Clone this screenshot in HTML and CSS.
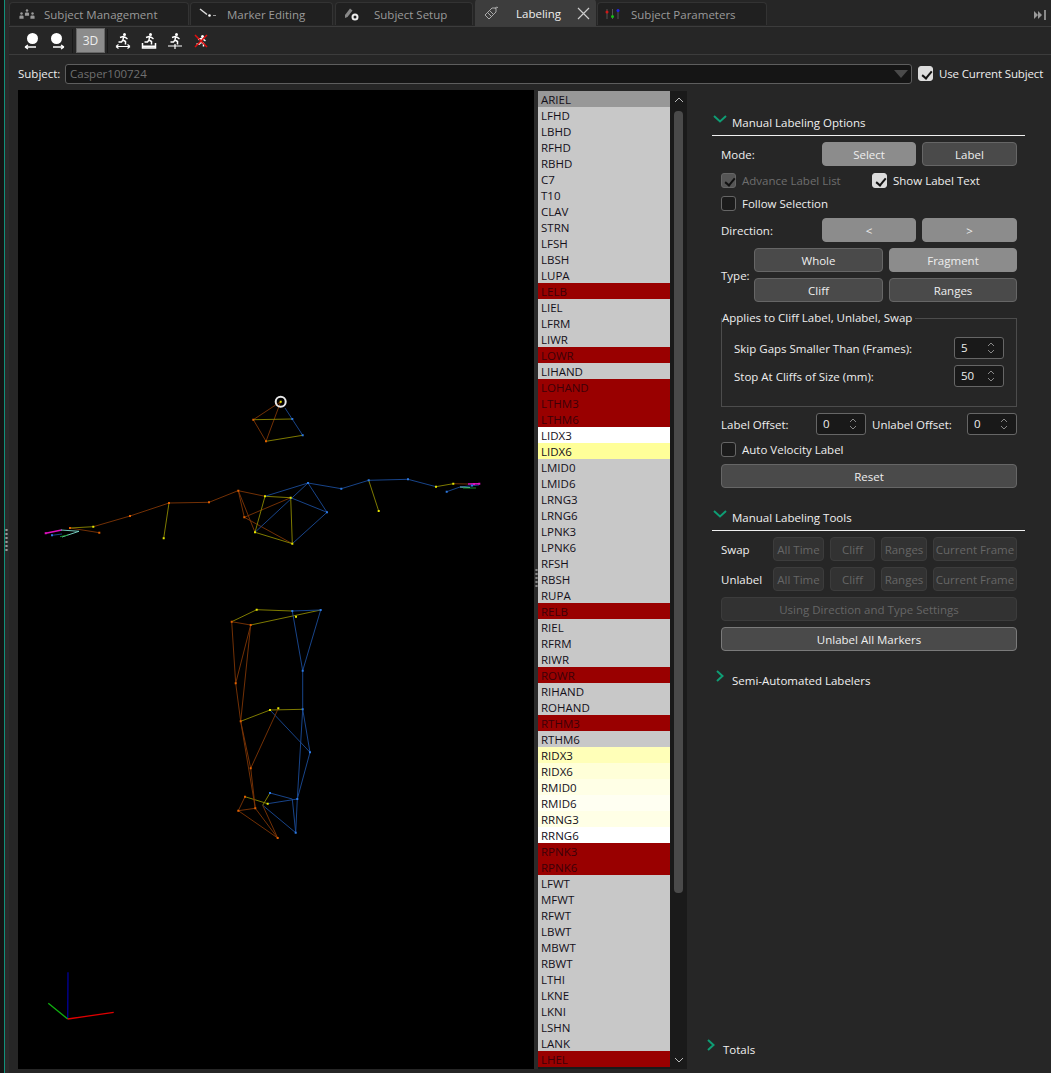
FILE: index.html
```html
<!DOCTYPE html>
<html lang="en">
<head>
    <meta charset="UTF-8">
    <title>Labeling</title>
    <link rel="stylesheet" href="styles.css">
</head>
<body>
    <svg class="defs" width="0" height="0">
        <symbol id="runner" viewBox="0 0 16 12">
            <circle cx="9.5" cy="1.5" r="1.5" fill="#fff"/>
            <path d="M5 4.5 L8 3.5 L10.5 4.5 L12.5 6 M8.5 4 L8 7 L10.5 8.5 L10.5 11.5 M8 7 L6.5 9 L3.5 9" fill="none" stroke="#fff" stroke-width="1.5"/>
        </symbol>
        <symbol id="person" viewBox="0 0 6 8">
            <circle cx="3" cy="1.7" r="1.5" fill="#999"/>
            <path d="M0.5 8 V5.5 Q0.5 4 2 4 H4 Q5.5 4 5.5 5.5 V8 Z" fill="#999"/>
        </symbol>
    </svg>

    <div class="app">
        <div class="edge"><div class="edge-dots"></div></div>
        <div class="main">
            <div class="tabs">
                <div class="tab tab-mgmt">
                    <svg class="tab-icon" width="16" height="12" viewBox="0 0 16 12"><use href="#person" x="0" y="4" width="5" height="7"/><use href="#person" x="5.5" y="1" width="5" height="7"/><use href="#person" x="11" y="4" width="5" height="7"/></svg>
                    Subject Management
                </div>
                <div class="tab tab-marker">
                    <svg class="tab-icon" width="17" height="12" viewBox="0 0 17 12"><path d="M1 1 L8 6.5" stroke="#ddd" stroke-width="1.5"/><circle cx="10.5" cy="7.5" r="1.3" fill="#fff"/><path d="M14 7.5 h3" stroke="#999"/></svg>
                    Marker Editing
                </div>
                <div class="tab tab-setup">
                    <svg class="tab-icon" width="16" height="14" viewBox="0 0 16 14"><path d="M1 8 L6 1.5 L8.5 3.5 L3.5 10 L1 11 Z" fill="#888"/><circle cx="11" cy="10" r="2.5" fill="none" stroke="#eee" stroke-width="2"/></svg>
                    Subject Setup
                </div>
                <div class="tab tab-active">
                    <svg class="tab-icon" width="15" height="15" viewBox="0 0 15 15"><path d="M1 9 L8 2 H12 V6 L5 13 Z M4 7 L8 11 M6 5 L10 9" fill="none" stroke="#aaa"/><path d="M11 3 Q12 0 14 1.5" fill="none" stroke="#aaa"/></svg>
                    <span class="tab-title">Labeling</span>
                    <svg class="tab-close" width="13" height="13" viewBox="0 0 13 13"><path d="M1 1 L12 12 M12 1 L1 12" stroke="#ccc" stroke-width="1.2"/></svg>
                </div>
                <div class="tab tab-params">
                    <svg class="tab-icon" width="15" height="11" viewBox="0 0 15 11"><path d="M2 0 V10 M7.5 0 V10 M13 0 V10" stroke="#555"/><circle cx="2" cy="3" r="1.5" fill="#d01818"/><circle cx="7.5" cy="7.5" r="1.5" fill="#18c018"/><circle cx="13" cy="1.5" r="1.5" fill="#2020e0"/></svg>
                    Subject Parameters
                </div>
                <svg class="tabs-end" width="13" height="10" viewBox="0 0 13 10"><path d="M1 1 L5 5 L1 9 Z M5 1 L9 5 L5 9 Z" fill="#999"/><path d="M12 0 V10" stroke="#ccc" stroke-width="1.2"/></svg>
            </div>

            <div class="toolbar">
                <svg class="tool" width="18" height="18" viewBox="0 0 18 18"><circle cx="9.5" cy="6.5" r="5.5" fill="#fff"/><path d="M2 15 H13 M2 15 L5 13 M2 15 L5 17" fill="none" stroke="#fff" stroke-width="1.3"/></svg>
                <svg class="tool" width="18" height="18" viewBox="0 0 18 18"><circle cx="8.5" cy="6.5" r="5.5" fill="#fff"/><path d="M5 15 H16 M16 15 L13 13 M16 15 L13 17" fill="none" stroke="#fff" stroke-width="1.3"/></svg>
                <div class="tool-sep"></div>
                <div class="tool-3d">3D</div>
                <div class="tool-sep"></div>
                <svg class="tool" width="16" height="16" viewBox="0 0 16 16"><use href="#runner" width="16" height="12"/><path d="M1 13.5 H15 M1 13.5 L3.5 11.5 M1 13.5 L3.5 15.5 M15 13.5 L12.5 11.5 M15 13.5 L12.5 15.5" fill="none" stroke="#fff" stroke-width="1.2"/></svg>
                <svg class="tool" width="16" height="16" viewBox="0 0 16 16"><use href="#runner" width="16" height="12"/><path d="M1.5 10 V15 H14.5 V10" fill="none" stroke="#fff" stroke-width="1.5"/><path d="M1.5 13.5 H14.5" stroke="#fff" stroke-width="2"/></svg>
                <svg class="tool" width="16" height="16" viewBox="0 0 16 16"><use href="#runner" width="16" height="12"/><path d="M1 13 H15 M8 11 V16" fill="none" stroke="#fff" stroke-width="1.2"/></svg>
                <svg class="tool" width="16" height="16" viewBox="0 0 16 16"><use href="#runner" y="2" width="16" height="12"/><path d="M2 2 L14 14 M14 2 L2 14" stroke="#e01010" stroke-width="1.5"/></svg>
            </div>

            <div class="subject-row">
                <span class="subject-label">Subject:</span>
                <div class="combo">Casper100724<span class="combo-arrow"></span></div>
                <label class="check"><span class="box on"></span>Use Current Subject</label>
            </div>

            <div class="body">
                <div class="viewport">
                    <svg class="skeleton" viewBox="18 90 516 979" width="516" height="979">
                        <!-- head -->
                        <path class="bone orange" d="M280.7 401.7 L253.3 419.7 L266 441.3 L280.7 401.7"/>
                        <path class="bone yellow" d="M253.3 419.7 L292.3 419 M266 441.3 L302.7 435.3"/>
                        <path class="bone blue" d="M285 408 L302.7 435.3"/>
                        <!-- torso -->
                        <path class="bone orange" d="M238.3 490.7 L265 496.3 M238.3 490.7 L255 532.3 M238.3 490.7 L244.3 517.3 L292.3 543.7 M244.3 517.3 L290.7 497.7"/>
                        <path class="bone yellow" d="M255 532.3 L292.3 543.7 M265 496.3 L290.7 497.7 M265 496.3 L255 532.3 M290.7 497.7 L292.3 543.7"/>
                        <path class="bone blue" d="M265 496.3 L308 483 M255 532.3 L308 483 M308 483 L327 512.3 M290.7 497.7 L327 512.3 M327 512.3 L292.3 543.7 M308 483 L341.3 488.7 L368.7 480.3 L408 479.3 L436 486.7"/>
                        <!-- arm on the right -->
                        <path class="bone yellow" d="M368.7 480.3 L378.7 511 M436 486.7 L453.3 483.7"/>
                        <path class="bone orange" d="M453.3 483.7 L468 484"/>
                        <path class="bone blue" d="M446.7 491.7 L460 487 L479 485"/>
                        <path class="bone magenta" d="M468 484 L479.3 483.7"/>
                        <path class="bone cyan" d="M460 487 L470 487.5"/>
                        <path class="bone green" d="M463 488 L476 488"/>
                        <!-- arm on the left -->
                        <path class="bone orange" d="M238 490.7 L209 502.3 L169 503 L130 516 L93.3 526.7 M70 528 L99.3 532.7"/>
                        <path class="bone yellow" d="M93.3 526.7 L70 528 M169 503 L163.7 538.3"/>
                        <path class="bone magenta" d="M45.7 533.3 L61.7 530"/>
                        <path class="bone cyan" d="M61 530 L79 531.3 L62 537"/>
                        <path class="bone blue" d="M52 535.3 L62 534"/>
                        <path class="bone green" d="M60 536.7 L68 535"/>
                        <!-- legs -->
                        <path class="bone yellow" d="M231.7 621.7 L256.7 609.7 L292.3 611 M250.7 625 L320.7 610 M240.7 721.3 L270 710 M270 710 L302.7 709.3 M245 796.7 L267.7 803.7 M262.7 805.3 L270 793"/>
                        <path class="bone blue" d="M292.3 611 L320.7 610 M292.3 611 L302.7 670.7 M320.7 610 L302.7 670.7 L302.7 709.3 L310 752.3 L297.3 799 M302.7 709.3 L297.3 799 M270 710 L310 752.3 M297.3 799 L295.7 832.7 M292.3 799 L295.7 832.7 M270 793 L292.3 799 M267.7 803.7 L297.3 799 M262.7 805.3 L295.7 832.7"/>
                        <path class="bone orange" d="M231.7 621.7 L250.7 625 M231.7 621.7 L235.7 683.3 L240.7 721.3 L255.3 808.3 M250.7 625 L235.7 683.3 M250.7 625 L240.7 721.3 L250.7 768.3 L255.3 808.3 M250.7 768.3 L278.3 708.3 M245 796.7 L238.3 810.7 L255.3 808.3 L277.7 838 L238.3 810.7 M262.7 805.3 L277.7 838"/>
                        <!-- markers -->
                        <path class="dots dot-orange" d="M253.3 419.7h0 M266 441.3h0 M238.3 490.7h0 M244.3 517.3h0 M209 502.3h0 M169 503h0 M130 516h0 M70 528h0 M99.3 532.7h0 M231.7 621.7h0 M250.7 625h0 M235.7 683.3h0 M240.7 721.3h0 M250.7 768.3h0 M245 796.7h0 M238.3 810.7h0 M255.3 808.3h0 M277.7 838h0"/>
                        <path class="dots dot-yellow" d="M280.7 401.7h0 M265 496.3h0 M290.7 497.7h0 M255 532.3h0 M292.3 543.7h0 M378.7 511h0 M436 486.7h0 M453.3 483.7h0 M93.3 526.7h0 M163.7 538.3h0 M256.7 609.7h0 M296 616.7h0 M270 710h0 M278.3 708.3h0 M267.7 803.7h0"/>
                        <path class="dots dot-blue" d="M292.3 419h0 M302.7 435.3h0 M308 483h0 M327 512.3h0 M341.3 488.7h0 M368.7 480.3h0 M408 479.3h0 M446.7 491.7h0 M292.3 611h0 M320.7 610h0 M302.7 670.7h0 M302.7 709.3h0 M310 752.3h0 M297.3 799h0 M270 793h0 M295.7 832.7h0 M472 485.5h0 M52 535.3h0"/>
                        <path class="dots dot-magenta" d="M45.7 533.3h0 M479.3 483.7h0 M474 484h0"/>
                        <circle class="selected" cx="280.7" cy="401.7" r="5"/>
                        <!-- axes -->
                        <path class="axis axis-z" d="M67.7 1019 L68 972.3"/>
                        <path class="axis axis-y" d="M67.7 1019 L48.3 1003.3"/>
                        <path class="axis axis-x" d="M67.7 1019 L113.7 1012.3"/>
                    </svg>
                </div>
                <div class="splitter"><span class="split-dots"></span></div>

                <ul class="markers">
                    <li class="m-head">ARIEL</li>
                    <li>LFHD</li><li>LBHD</li><li>RFHD</li><li>RBHD</li><li>C7</li><li>T10</li><li>CLAV</li><li>STRN</li><li>LFSH</li><li>LBSH</li><li>LUPA</li>
                    <li class="m-red">LELB</li>
                    <li>LIEL</li><li>LFRM</li><li>LIWR</li>
                    <li class="m-red">LOWR</li>
                    <li>LIHAND</li>
                    <li class="m-red">LOHAND</li><li class="m-red">LTHM3</li><li class="m-red">LTHM6</li>
                    <li class="m-white">LIDX3</li>
                    <li class="m-y1">LIDX6</li>
                    <li>LMID0</li><li>LMID6</li><li>LRNG3</li><li>LRNG6</li><li>LPNK3</li><li>LPNK6</li><li>RFSH</li><li>RBSH</li><li>RUPA</li>
                    <li class="m-red">RELB</li>
                    <li>RIEL</li><li>RFRM</li><li>RIWR</li>
                    <li class="m-red">ROWR</li>
                    <li>RIHAND</li><li>ROHAND</li>
                    <li class="m-red">RTHM3</li>
                    <li>RTHM6</li>
                    <li class="m-y2">RIDX3</li><li class="m-y3">RIDX6</li><li class="m-y4">RMID0</li><li class="m-y5">RMID6</li><li class="m-y4">RRNG3</li>
                    <li class="m-white">RRNG6</li>
                    <li class="m-red">RPNK3</li><li class="m-red">RPNK6</li>
                    <li>LFWT</li><li>MFWT</li><li>RFWT</li><li>LBWT</li><li>MBWT</li><li>RBWT</li><li>LTHI</li><li>LKNE</li><li>LKNI</li><li>LSHN</li><li>LANK</li>
                    <li class="m-red">LHEL</li>
                </ul>
                <div class="scroll">
                    <svg class="scroll-arrow" width="10" height="6" viewBox="0 0 10 6"><path d="M1 5 L5 1 L9 5" fill="none" stroke="#bbb"/></svg>
                    <div class="scroll-track"><div class="scroll-thumb"></div></div>
                    <svg class="scroll-arrow" width="10" height="6" viewBox="0 0 10 6"><path d="M1 1 L5 5 L9 1" fill="none" stroke="#bbb"/></svg>
                </div>

                <div class="side">
                    <div class="section-head open">
                        <svg class="chev" width="14" height="8" viewBox="0 0 14 8"><path d="M1 1 L7 6.5 L13 1" fill="none" stroke="#0f9d74" stroke-width="2"/></svg>
                        Manual Labeling Options
                    </div>
                    <div class="section">
                        <div class="row row-mode">
                            <span class="row-label">Mode:</span>
                            <button class="btn btn-on">Select</button>
                            <button class="btn">Label</button>
                        </div>
                        <div class="row-checks">
                            <label class="check check-off"><span class="box on dim"></span>Advance Label List</label>
                            <label class="check"><span class="box on"></span>Show Label Text</label>
                        </div>
                        <label class="check check-follow"><span class="box"></span>Follow Selection</label>
                        <div class="row row-mode row-dir">
                            <span class="row-label">Direction:</span>
                            <button class="btn btn-on">&lt;</button>
                            <button class="btn btn-on">&gt;</button>
                        </div>
                        <div class="type-row">
                            <span class="type-label">Type:</span>
                            <div class="type-grid">
                                <button class="btn">Whole</button>
                                <button class="btn btn-on">Fragment</button>
                                <button class="btn">Cliff</button>
                                <button class="btn">Ranges</button>
                            </div>
                        </div>
                        <fieldset class="group">
                            <legend>Applies to Cliff Label, Unlabel, Swap</legend>
                            <div class="group-row">
                                <span>Skip Gaps Smaller Than (Frames):</span>
                                <div class="spin">5<span class="spin-arrows"><svg width="8" height="14" viewBox="0 0 8 14"><path d="M1 5 L4 2 L7 5 M1 9 L4 12 L7 9" fill="none" stroke="#888"/></svg></span></div>
                            </div>
                            <div class="group-row">
                                <span>Stop At Cliffs of Size (mm):</span>
                                <div class="spin">50<span class="spin-arrows"><svg width="8" height="14" viewBox="0 0 8 14"><path d="M1 5 L4 2 L7 5 M1 9 L4 12 L7 9" fill="none" stroke="#888"/></svg></span></div>
                            </div>
                        </fieldset>
                        <div class="offset-row">
                            <span class="offset-a">Label Offset:</span>
                            <div class="spin">0<span class="spin-arrows"><svg width="8" height="14" viewBox="0 0 8 14"><path d="M1 5 L4 2 L7 5 M1 9 L4 12 L7 9" fill="none" stroke="#888"/></svg></span></div>
                            <span class="offset-b">Unlabel Offset:</span>
                            <div class="spin">0<span class="spin-arrows"><svg width="8" height="14" viewBox="0 0 8 14"><path d="M1 5 L4 2 L7 5 M1 9 L4 12 L7 9" fill="none" stroke="#888"/></svg></span></div>
                        </div>
                        <label class="check check-auto"><span class="box"></span>Auto Velocity Label</label>
                        <button class="btn btn-wide btn-reset">Reset</button>
                    </div>

                    <div class="section-head open head-tools">
                        <svg class="chev" width="14" height="8" viewBox="0 0 14 8"><path d="M1 1 L7 6.5 L13 1" fill="none" stroke="#0f9d74" stroke-width="2"/></svg>
                        Manual Labeling Tools
                    </div>
                    <div class="section section-tools">
                        <div class="tool-row">
                            <span class="tool-label">Swap</span>
                            <button class="btn btn-off b-all">All Time</button>
                            <button class="btn btn-off b-cliff">Cliff</button>
                            <button class="btn btn-off b-ranges">Ranges</button>
                            <button class="btn btn-off b-frame">Current Frame</button>
                        </div>
                        <div class="tool-row">
                            <span class="tool-label">Unlabel</span>
                            <button class="btn btn-off b-all">All Time</button>
                            <button class="btn btn-off b-cliff">Cliff</button>
                            <button class="btn btn-off b-ranges">Ranges</button>
                            <button class="btn btn-off b-frame">Current Frame</button>
                        </div>
                        <button class="btn btn-off btn-wide">Using Direction and Type Settings</button>
                        <button class="btn btn-wide btn-lit">Unlabel All Markers</button>
                    </div>

                    <div class="section-head closed head-semi">
                        <svg class="chev-r" width="8" height="12" viewBox="0 0 8 12"><path d="M1 1 L6.5 6 L1 11" fill="none" stroke="#0f9d74" stroke-width="2"/></svg>
                        Semi-Automated Labelers
                    </div>

                    <div class="section-head closed head-totals">
                        <svg class="chev-r" width="8" height="12" viewBox="0 0 8 12"><path d="M1 1 L6.5 6 L1 11" fill="none" stroke="#0f9d74" stroke-width="2"/></svg>
                        Totals
                    </div>
                </div>
            </div>
        </div>
    </div>
</body>
</html>
```

FILE: styles.css
```css
* {
    box-sizing: border-box;
}

body {
    margin: 0;
    height: 1073px;
    overflow: hidden;
    background-color: #262626;
    color: #eee;
    font-family: "Open Sans", "Noto Sans", sans-serif;
    font-size: 11.5px;
}

.defs {
    display: block;
    height: 0;
}

.app {
    display: flex;
    height: 1073px;
}

.edge {
    width: 9px;
    flex: none;
    position: relative;
    background-color: #2b2b2b;
    border-left: 4px solid #141414;
    box-shadow: inset 1px 0 0 #12907a;
}

.edge-dots {
    position: absolute;
    left: 1px;
    top: 528px;
    width: 3px;
    height: 24px;
    background: radial-gradient(circle, #999 1px, transparent 1.3px) 0 0 / 3px 4px;
}

.main {
    flex: 1;
    min-width: 0;
    display: flex;
    flex-direction: column;
}

/* tabs */
.tabs {
    height: 27px;
    flex: none;
    display: flex;
    align-items: flex-end;
    border-bottom: 1px solid #3c3c3c;
    padding-right: 5px;
    color: #9a9a9a;
}

.tab {
    height: 23px;
    margin-bottom: 1px;
    display: flex;
    align-items: center;
    background-color: #202020;
    border: 1px solid #333;
    border-bottom: none;
    border-radius: 4px 4px 0 0;
    margin-right: 1px;
}

.tab-icon {
    flex: none;
}

.tab-mgmt {
    width: 180px;
    padding-left: 9px;
    gap: 9px;
}

.tab-marker {
    width: 143px;
    padding-left: 8px;
    gap: 11px;
}

.tab-setup {
    width: 138px;
    padding-left: 8px;
    gap: 14px;
    margin-left: 1px;
}

.tab-active {
    width: 121px;
    height: 27px;
    margin: 0 1px 0 1px;
    padding: 1px 0 0 9px;
    gap: 17px;
    background-color: #3d3d3d;
    border: none;
    color: #eee;
}

.tab-title {
    width: 44px;
}

.tab-params {
    width: 170px;
    padding-left: 7px;
    gap: 11px;
}

.tabs-end {
    margin-left: auto;
    margin-bottom: 6px;
}

/* toolbar */
.toolbar {
    height: 28px;
    flex: none;
    display: flex;
    align-items: center;
    padding-left: 14px;
    border-bottom: 1px solid #3c3c3c;
}

.tool {
    flex: none;
    margin-right: 7px;
}

.tool-sep ~ .tool {
    margin-right: 10px;
}

.tool-sep {
    width: 1px;
    height: 24px;
    background-color: #181818;
    margin-left: -1px;
    margin-right: 3px;
}

.tool-3d {
    width: 29px;
    height: 25px;
    margin-right: 3px;
    display: flex;
    align-items: center;
    justify-content: center;
    background-color: #8c8c8c;
    border: 1px solid #666;
    color: #eee;
    font-size: 12px;
}

.tool-3d + .tool-sep {
    margin-right: 7px;
}

/* subject */
.subject-row {
    height: 35px;
    flex: none;
    display: flex;
    align-items: center;
    padding: 2px 8px 0 9px;
}

.subject-label {
    width: 47px;
    flex: none;
}

.combo {
    width: 847px;
    height: 20px;
    flex: none;
    padding-left: 4px;
    line-height: 18px;
    position: relative;
    background-color: #151515;
    border: 1px solid #5e5e5e;
    border-radius: 3px;
    color: #707070;
}

.combo-arrow {
    position: absolute;
    right: 3px;
    top: 5px;
    border: 7px solid transparent;
    border-top: 8px solid #4a4a4a;
    border-bottom: none;
}

.check {
    display: flex;
    align-items: center;
    gap: 6px;
    white-space: nowrap;
}

.subject-row .check {
    margin-left: 6px;
    letter-spacing: -0.15px;
}

.box {
    width: 15px;
    height: 15px;
    flex: none;
    position: relative;
    background-color: #1b1b1b;
    border: 1px solid #666;
    border-radius: 3px;
}

.box.on {
    background-color: #dcdcdc;
    border-color: #dcdcdc;
}

.box.on::after {
    content: "";
    position: absolute;
    left: 4.5px;
    top: 1.5px;
    width: 4px;
    height: 8px;
    border: solid #111;
    border-width: 0 2px 2px 0;
    transform: rotate(40deg);
}

.box.dim {
    background-color: #555;
    border-color: #666;
}

/* body */
.body {
    flex: 1;
    min-height: 0;
    display: flex;
    padding-left: 9px;
    padding-bottom: 4px;
}

.viewport {
    width: 516px;
    flex: none;
    background-color: #000;
}

.skeleton {
    display: block;
}

.bone {
    fill: none;
    stroke-width: 0.9;
}

.orange {
    stroke: #7f3606;
}

.yellow {
    stroke: #8c8800;
}

.blue {
    stroke: #1b4c98;
}

.magenta {
    stroke: #e010c0;
    stroke-width: 1.5;
}

.cyan {
    stroke: #80e0d0;
}

.green {
    stroke: #1a9a30;
}

.dots {
    fill: none;
    stroke-width: 2;
    stroke-linecap: square;
}

.dot-orange {
    stroke: #e06000;
}

.dot-yellow {
    stroke: #e6e600;
}

.dot-blue {
    stroke: #2c78e0;
}

.dot-magenta {
    stroke: #e010c0;
}

.selected {
    fill: none;
    stroke: #e8e8e8;
    stroke-width: 2;
}

.axis {
    fill: none;
    stroke-width: 1.3;
}

.axis-z {
    stroke: #00009a;
}

.axis-y {
    stroke: #10b010;
}

.axis-x {
    stroke: #e00000;
}

.splitter {
    width: 4px;
    flex: none;
    position: relative;
    background-color: #2a2a2a;
}

.split-dots {
    position: absolute;
    left: 1px;
    top: 478px;
    width: 3px;
    height: 20px;
    background: radial-gradient(circle, #888 1px, transparent 1.3px) 0 0 / 3px 4px;
}

/* marker list */
.markers {
    width: 132px;
    flex: none;
    list-style: none;
    margin: 1px 0 0;
    padding: 0;
    height: 978px;
    overflow: hidden;
    background-color: #1a1a1a;
}

.markers li {
    height: 16px;
    line-height: 18px;
    padding-left: 3px;
    background-color: #c8c8c8;
    color: #14101a;
    font-size: 11.5px;
}

.markers .m-head {
    background-color: #989898;
}

.markers .m-red {
    background-color: #990000;
    color: #3c0008;
}

.markers .m-white {
    background-color: #fff;
}

.markers .m-y1 {
    background-color: #ffff99;
}

.markers .m-y2 {
    background-color: #ffffb8;
}

.markers .m-y3 {
    background-color: #ffffd8;
}

.markers .m-y4 {
    background-color: #ffffe6;
}

.markers .m-y5 {
    background-color: #fffff2;
}

.scroll {
    width: 17px;
    flex: none;
    margin-top: 1px;
    height: 978px;
    display: flex;
    flex-direction: column;
    align-items: center;
    background-color: #1a1a1a;
}

.scroll-arrow {
    flex: none;
    margin: 6px 0;
}

.scroll-track {
    flex: 1;
    width: 100%;
    margin-top: 2px;
}

.scroll-thumb {
    width: 9px;
    height: 782px;
    margin: 0 auto;
    background-color: #4a4a4a;
    border-radius: 4px;
}

/* options column */
.side {
    flex: 1;
    min-width: 0;
    display: flex;
    flex-direction: column;
    padding-left: 25px;
}

.section-head {
    position: relative;
    padding-left: 20px;
    margin-right: 26px;
    height: 22px;
    line-height: 22px;
    margin-top: 22px;
    color: #f0f0f0;
}

.section-head.open {
    border-bottom: 1px solid #f0f0f0;
    height: 24px;
}

.chev {
    position: absolute;
    left: 1px;
    top: 3px;
}

.chev-r {
    position: absolute;
    left: 4px;
    top: 0;
}

.section {
    width: 296px;
    margin-left: 9px;
    padding-top: 6px;
    display: flex;
    flex-direction: column;
}

.btn {
    height: 24px;
    padding: 0;
    font: inherit;
    color: #eee;
    background-color: #4a4a4a;
    border: 1px solid #666;
    border-radius: 4px;
}

.btn-on {
    background-color: #8c8c8c;
    border-color: #8c8c8c;
}

.btn-off {
    background-color: #323232;
    border-color: #3c3c3c;
    color: #666;
}

.row {
    display: flex;
    align-items: center;
    gap: 6px;
}

.row-label {
    width: 95px;
    flex: none;
}

.row-mode .btn {
    width: 94px;
}

.row-mode .btn:last-child {
    width: 95px;
}

.row-checks {
    display: flex;
    margin-top: 7px;
}

.check-off {
    width: 151px;
    color: #6e6e6e;
}

.check-follow {
    margin-top: 8px;
}

.row-dir {
    margin-top: 7px;
}

.type-row {
    display: flex;
    align-items: center;
    margin-top: 6px;
}

.type-label {
    width: 33px;
    flex: none;
}

.type-grid {
    display: grid;
    grid-template-columns: 129px 128px;
    gap: 6px;
}

.group {
    margin: 8px 0 0;
    padding: 11px 12px 0 12px;
    height: 97px;
    border: 1px solid #4c4c4c;
}

.group legend {
    padding: 0 3px 0 0;
    margin-left: -12px;
    line-height: 16px;
}

.group-row {
    display: flex;
    align-items: center;
    justify-content: space-between;
    height: 22px;
    margin-bottom: 6px;
}

.spin {
    width: 50px;
    height: 22px;
    flex: none;
    position: relative;
    padding-left: 6px;
    line-height: 20px;
    background-color: #191919;
    border: 1px solid #666;
    border-radius: 3px;
}

.spin-arrows {
    position: absolute;
    right: 8px;
    top: 3px;
    height: 14px;
    display: flex;
}

.offset-row {
    display: flex;
    align-items: center;
    margin-top: 6px;
}

.offset-a {
    width: 95px;
    flex: none;
}

.offset-b {
    width: 101px;
    flex: none;
    padding-left: 6px;
}

.check-auto {
    margin-top: 7px;
}

.btn-wide {
    width: 296px;
}

.btn-reset {
    margin-top: 7px;
}

.head-tools {
    margin-top: 19px;
}

.section-tools {
    padding-top: 6px;
    gap: 6px;
}

.tool-row {
    display: flex;
    align-items: center;
    gap: 6px;
}

.tool-label {
    width: 46px;
    flex: none;
}

.b-all {
    width: 51px;
}

.b-cliff {
    width: 45px;
}

.b-ranges {
    width: 46px;
}

.b-frame {
    width: 84px;
}

.btn-lit {
    border-color: #7a7a7a;
}

.head-semi {
    margin-top: 19px;
}

.head-totals {
    margin-top: auto;
    margin-bottom: 8px;
    margin-left: -9px;
    padding-left: 20px;
}
```
